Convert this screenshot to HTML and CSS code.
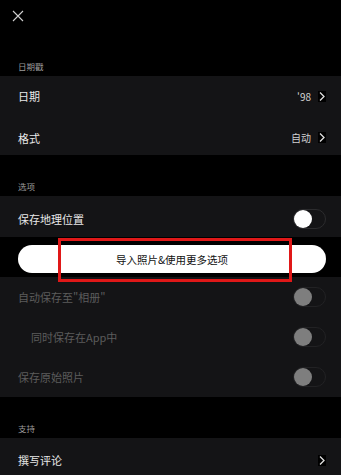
FILE: index.html
```html
<!DOCTYPE html>
<html lang="zh-CN">
<head>
<meta charset="utf-8">
<link rel="stylesheet" href="styles.css">
</head>
<body>
<div class="page">
  <div class="topbar">
    <svg class="close" width="12" height="12" viewBox="0 0 12 12"><path d="M1 1 L11 11 M11 1 L1 11" stroke="#d0d0d0" stroke-width="1.1" fill="none"/></svg>
  </div>
  <div class="sec sec-first"><span>日期戳</span></div>
  <div class="row r1"><span class="label">日期</span><span class="right"><span class="val">'98</span><span class="chev"><svg width="8" height="11" viewBox="0 0 8 11"><path d="M2 1.5 L6 5.5 L2 9.5" stroke="#e0e0e0" stroke-width="1.3" fill="none"/></svg></span></span></div>
  <div class="row r2"><span class="label">格式</span><span class="right"><span class="val">自动</span><span class="chev"><svg width="8" height="11" viewBox="0 0 8 11"><path d="M2 1.5 L6 5.5 L2 9.5" stroke="#e0e0e0" stroke-width="1.3" fill="none"/></svg></span></span></div>
  <div class="sec"><span>选项</span></div>
  <div class="row r3"><span class="label">保存地理位置</span><span class="toggle"><span class="knob"></span></span></div>
  <div class="btnstrip"><div class="btn">导入照片&amp;使用更多选项</div></div>
  <div class="row rd"><span class="label dis">自动保存至"相册"</span><span class="toggle off"><span class="knob"></span></span></div>
  <div class="row rd"><span class="label dis indent">同时保存在App中</span><span class="toggle off"><span class="knob"></span></span></div>
  <div class="row rd"><span class="label dis">保存原始照片</span><span class="toggle off"><span class="knob"></span></span></div>
  <div class="sec"><span>支持</span></div>
  <div class="row r4"><span class="label">撰写评论</span><span class="right"><span class="chev"><svg width="8" height="11" viewBox="0 0 8 11"><path d="M2 1.5 L6 5.5 L2 9.5" stroke="#e0e0e0" stroke-width="1.3" fill="none"/></svg></span></span></div>
  <div class="highlight"></div>
</div>
</body>
</html>
```
FILE: styles.css
```css
html, body {
  margin: 0;
  padding: 0;
  background: #000;
}
body {
  font-family: "Noto Sans CJK SC", "Noto Sans", sans-serif;
  color: #e6e6e6;
}
.page {
  position: relative;
  width: 341px;
  height: 475px;
  overflow: hidden;
  display: flex;
  flex-direction: column;
}
.topbar {
  height: 55px;
  flex: none;
  padding: 10px 0 0 12px;
  box-sizing: border-box;
}
.close {
  display: block;
}
.sec {
  height: 41px;
  flex: none;
  display: flex;
  align-items: flex-end;
  padding: 0 0 5px 18px;
  box-sizing: border-box;
  font-size: 8.5px;
  line-height: 10px;
  color: #9c9c9c;
}
.sec-first {
  height: 21px;
}
.row {
  flex: none;
  height: 40px;
  background: #141416;
  display: flex;
  align-items: center;
  justify-content: space-between;
  padding: 0 15px 0 18px;
  box-sizing: border-box;
  font-size: 11px;
}
.r1 { height: 40px; }
.r2 { height: 39px; padding-top: 4px; }
.r3 { height: 41px; padding-top: 4px; }
.r4 { height: 44px; }
.label {
  color: #e8e8e8;
}
.dis {
  color: #5c5c5c;
}
.indent {
  margin-left: 13px;
}
.right {
  display: flex;
  align-items: center;
  gap: 7px;
}
.val {
  font-size: 10px;
  color: #d2d2d2;
}
.chev {
  width: 8px;
  height: 11px;
  background: #000;
  display: block;
}
.chev svg {
  display: block;
}
.toggle {
  width: 33px;
  height: 20px;
  border-radius: 10px;
  background: #141416;
  border: 1px solid #2c2c2e;
  box-sizing: border-box;
  position: relative;
  display: block;
}
.knob {
  position: absolute;
  left: 0;
  top: 0;
  width: 18px;
  height: 18px;
  border-radius: 50%;
  background: #fff;
}
.toggle.off .knob {
  background: #7e7e7e;
}
.toggle.off {
  border-color: #222224;
}
.rd {
  height: 40px;
}
.btnstrip {
  flex: none;
  height: 40px;
  padding: 8px 15px 4px 18px;
  box-sizing: border-box;
  background: #000;
}
.btn {
  height: 28px;
  border-radius: 14px;
  background: #fff;
  color: #111;
  font-size: 10.5px;
  display: flex;
  align-items: center;
  justify-content: center;
}
.highlight {
  position: absolute;
  left: 58px;
  top: 238px;
  width: 234px;
  height: 44px;
  border: 3px solid #e01818;
  box-sizing: border-box;
}
```
